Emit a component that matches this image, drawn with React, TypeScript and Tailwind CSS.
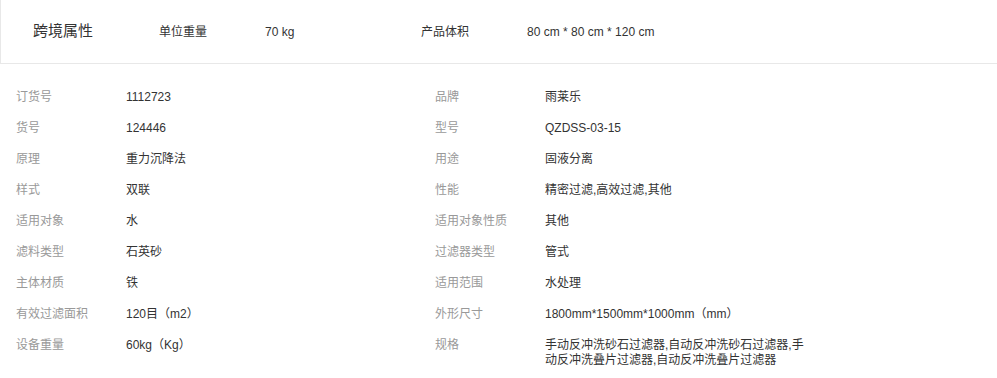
import React from "react";

// Cross-border attributes shown in the header strip
const crossBorder = [
  { label: "单位重量", value: "70 kg" },
  { label: "产品体积", value: "80 cm * 80 cm * 120 cm" },
];

// Spec table, left and right columns
const leftSpecs = [
  { label: "订货号", value: "1112723" },
  { label: "货号", value: "124446" },
  { label: "原理", value: "重力沉降法" },
  { label: "样式", value: "双联" },
  { label: "适用对象", value: "水" },
  { label: "滤料类型", value: "石英砂" },
  { label: "主体材质", value: "铁" },
  { label: "有效过滤面积", value: "120目（m2）" },
  { label: "设备重量", value: "60kg（Kg）" },
];

const rightSpecs = [
  { label: "品牌", value: "雨莱乐" },
  { label: "型号", value: "QZDSS-03-15" },
  { label: "用途", value: "固液分离" },
  { label: "性能", value: "精密过滤,高效过滤,其他" },
  { label: "适用对象性质", value: "其他" },
  { label: "过滤器类型", value: "管式" },
  { label: "适用范围", value: "水处理" },
  { label: "外形尺寸", value: "1800mm*1500mm*1000mm（mm）" },
  { label: "规格", value: "手动反冲洗砂石过滤器,自动反冲洗砂石过滤器,手动反冲洗叠片过滤器,自动反冲洗叠片过滤器" },
];

function SpecColumn({ items }: { items: { label: string; value: string }[] }) {
  return (
    <div className="w-[419px] flex flex-col">
      {items.map((item, idx) => (
        <div key={idx} className="flex items-start text-[12px] leading-[15px] pb-[16px]">
          <span className="w-[110px] shrink-0 text-[#999]">{item.label}</span>
          <span className="w-[262px] text-[#333] break-all">{item.value}</span>
        </div>
      ))}
    </div>
  );
}

export default function App() {
  return (
    <div
      className="w-[997px] h-[378px] bg-white overflow-hidden"
      style={{ fontFamily: '"Liberation Sans", Arial, "Noto Sans CJK SC", sans-serif' }}
    >
      {/* Header strip */}
      <div className="h-[64px] border-l border-b border-[#e8e8e8] flex items-center">
        <div className="w-[158px] pl-[32px] text-[15px] text-[#333]">跨境属性</div>
        {crossBorder.map((item, idx) => (
          <div key={idx} className="flex items-center text-[12px]">
            <span className="w-[106px] text-[#333]">{item.label}</span>
            <span className="w-[156px] text-[#333]">{item.value}</span>
          </div>
        ))}
      </div>

      {/* Spec table */}
      <div className="flex pl-[16px] pt-[26px]">
        <SpecColumn items={leftSpecs} />
        <SpecColumn items={rightSpecs} />
      </div>
    </div>
  );
}
